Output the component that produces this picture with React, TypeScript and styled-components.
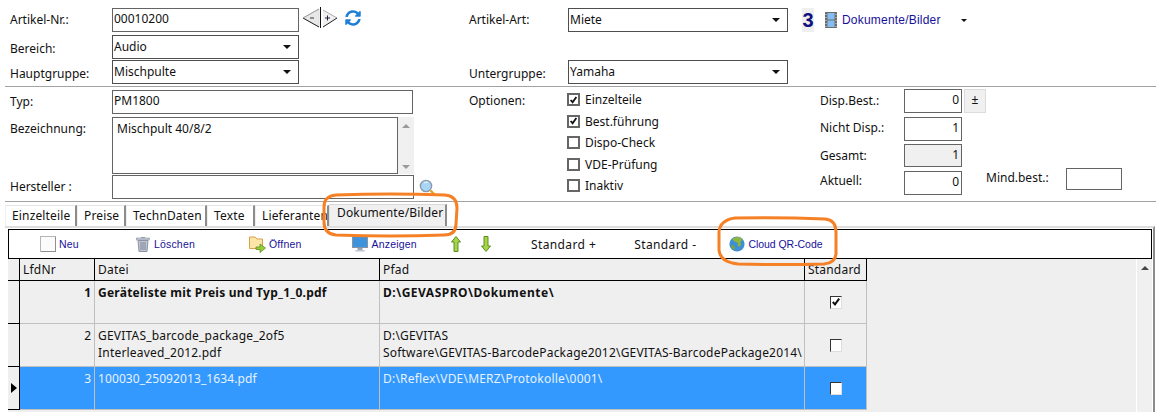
import React from "react";
import styled, { createGlobalStyle } from "styled-components";
import { FaSyncAlt } from "react-icons/fa";

const Global = createGlobalStyle`
  html, body { margin: 0; padding: 0; background: #fff; }
  body { font-family: "Noto Sans", "Open Sans", Arial, sans-serif; font-size: 12px; color: #111; }
  #root { width: 1156px; height: 412px; overflow: hidden; }
  * { box-sizing: border-box; }
`;

const Page = styled.div`
  position: relative;
  width: 1156px;
  height: 412px;
  overflow: hidden;
  background: #fff;
`;

const TopSection = styled.section`
  display: grid;
  grid-template-columns: 102px 357px 99px 1fr;
  grid-template-rows: 27px 25px 26px;
  height: 86px;
  padding: 8px 0 0 10px;
`;

const Divider = styled.hr`
  margin: 0 0 0 5px;
  border: 0;
  height: 1px;
  background: #a2a2a2;
`;

const Label = styled.label<{ $top?: number }>`
  display: block;
  padding-top: ${(p) => p.$top ?? 3}px;
  line-height: 17px;
  white-space: nowrap;
`;

const FieldRowWrap = styled.div`
  display: flex;
  align-items: flex-start;
  gap: 3px;
`;

const TextBox = styled.input<{ $w: number; $h?: number; $disabled?: boolean; $right?: boolean }>`
  display: block;
  width: ${(p) => p.$w}px;
  height: ${(p) => p.$h ?? 24}px;
  border: 1px solid #646464;
  border-radius: 0;
  outline: none;
  padding: 0 ${(p) => (p.$right ? 2 : 1)}px 3px 1px;
  margin: 0;
  font: inherit;
  color: #111;
  text-align: ${(p) => (p.$right ? "right" : "left")};
  background: ${(p) => (p.$disabled ? "#f0f0f0" : "#fff")};
`;

const SelectBox = styled.div<{ $w: number }>`
  position: relative;
  width: ${(p) => p.$w}px;
  height: 24px;
  border: 1px solid #4e4e4e;
  padding: 2px 0 0 1px;
  line-height: 17px;
  background: #fff;
  &::after {
    content: "";
    position: absolute;
    right: 7px;
    top: 9px;
    border-left: 4px solid transparent;
    border-right: 4px solid transparent;
    border-top: 4px solid #111;
  }
`;

const MiddleSection = styled.section`
  display: flex;
  height: 114px;
  padding-left: 10px;
`;

const LeftColumn = styled.div`
  width: 459px;
  display: flex;
  flex-direction: column;
`;

const FormRow = styled.div<{ $top: number }>`
  display: flex;
  margin-top: ${(p) => p.$top}px;
`;

const RowLabel = styled(Label)`
  width: 102px;
  flex: none;
`;

const MemoWrap = styled.div`
  display: flex;
  width: 302px;
  height: 57px;
`;

const Memo = styled.div`
  flex: 1;
  border: 1px solid #646464;
  padding: 2px 4px;
  line-height: 17px;
`;

const MemoScroll = styled.div`
  width: 16px;
  background: #f0f0f0;
  display: flex;
  flex-direction: column;
  justify-content: space-between;
  align-items: center;
  padding: 7px 0 5px;
`;

const ScrollArrow = styled.span<{ $down?: boolean; $dark?: boolean }>`
  width: 0;
  height: 0;
  border-left: 4px solid transparent;
  border-right: 4px solid transparent;
  ${(p) =>
    p.$down
      ? `border-top: 4px solid ${p.$dark ? "#444" : "#9a9a9a"};`
      : `border-bottom: 4px solid ${p.$dark ? "#444" : "#9a9a9a"};`}
`;

const SearchSlot = styled.span`
  margin: 4px 0 0 5px;
  display: block;
`;

const OptionsColumn = styled.div`
  width: 351px;
  display: flex;
`;

const OptionsLabel = styled(Label)`
  width: 98px;
  flex: none;
  margin-top: 2px;
`;

const CheckList = styled.div`
  display: flex;
  flex-direction: column;
  padding-top: 2px;
`;

const CheckRow = styled.div`
  display: flex;
  align-items: center;
  gap: 5px;
  height: 21.5px;
  line-height: 17px;
`;

const CheckSquare = styled.span`
  width: 13px;
  height: 13px;
  border: 2px solid #666;
  background: #fff;
  display: flex;
  align-items: center;
  justify-content: center;
`;

const StockColumn = styled.div`
  display: flex;
  flex-direction: column;
  padding-top: 2px;
`;

const StockRow = styled.div<{ $h: number }>`
  display: flex;
  height: ${(p) => p.$h}px;
`;

const StockLabel = styled(Label)`
  width: 84px;
  flex: none;
`;

const PlusMinus = styled.button`
  width: 22px;
  height: 24px;
  margin-left: 2px;
  padding: 0 0 3px;
  border: 1px solid #dcdcdc;
  background: #f0f0f0;
  font: inherit;
  color: #111;
`;

const MinLabel = styled.span`
  margin-left: 24px;
  width: 80px;
  line-height: 17px;
  margin-top: -2px;
`;

const MinBox = styled(TextBox)`
  margin-top: -3px;
`;

const TabStrip = styled.div`
  display: flex;
  align-items: flex-end;
  height: 22px;
  margin: 2px 0 0 5px;
`;

const Tab = styled.div<{ $w: number; $active?: boolean }>`
  width: ${(p) => p.$w}px;
  height: ${(p) => (p.$active ? 22 : 21)}px;
  flex: none;
  overflow: hidden;
  white-space: nowrap;
  padding: 0 0 0 ${(p) => (p.$active ? 7 : 6)}px;
  line-height: ${(p) => (p.$active ? 16 : 19)}px;
  font-size: 12px;
  letter-spacing: 0.15px;
  background: ${(p) => (p.$active ? "#f0f0f0" : "#fff")};
  border-top: 1px solid ${(p) => (p.$active ? "#d8d8d8" : "#e4e4e4")};
  border-right: 2px solid #8c8c8c;
  border-left: 1px solid ${(p) => (p.$active ? "#e0e0e0" : "#efefef")};
`;

const TabPanel = styled.div`
  margin: 0 0 0 5px;
  width: 1150px;
  height: 186px;
  border-top: 2px solid #dedede;
  border-right: 2px solid #8c8c8c;
  padding: 1px 0 0 3px;
`;

const Toolbar = styled.div`
  width: 1144px;
  height: 30px;
  border: 1px solid #000;
  display: flex;
  align-items: center;
  background: #fff;
`;

const ToolButton = styled.div<{ $left: number; $gap?: number; $spacing?: number }>`
  display: flex;
  align-items: center;
  gap: ${(p) => p.$gap ?? 3}px;
  margin-left: ${(p) => p.$left}px;
  font-family: "Liberation Sans", Arial, sans-serif;
  font-size: 10.5px;
  letter-spacing: ${(p) => p.$spacing ?? 0.2}px;
  color: #17109a;
  white-space: nowrap;
`;

const PlainAction = styled.div<{ $left: number }>`
  margin-left: ${(p) => p.$left}px;
  line-height: 17px;
  letter-spacing: 0.4px;
  white-space: nowrap;
`;

const GridArea = styled.div`
  display: flex;
  justify-content: space-between;
  width: 1144px;
  height: 154px;
  background: #efefef;
`;

const Table = styled.div`
  width: 859px;
`;

const COLS = "12px 75px 285px 425px 62px";

const HeaderRow = styled.div`
  display: grid;
  grid-template-columns: ${COLS};
  height: 22px;
`;

const HeaderCell = styled.div`
  border-right: 1px solid #000;
  border-bottom: 1px solid #000;
  padding: 2px 0 0 3px;
  line-height: 17px;
  letter-spacing: 0.2px;
`;

const DataRow = styled.div<{ $selected?: boolean; $bold?: boolean }>`
  display: grid;
  grid-template-columns: ${COLS};
  height: 43px;
  font-weight: ${(p) => (p.$bold ? 700 : 400)};
  color: ${(p) => (p.$selected ? "#e6f2ff" : "#111")};
  background: ${(p) => (p.$selected ? "#3399ff" : "transparent")};
`;

const Indicator = styled.div`
  background: #efefef;
  border-right: 1px solid #000;
  border-bottom: 1px solid #000;
  display: flex;
  align-items: center;
  padding-left: 3px;
`;

const Pointer = styled.span`
  width: 0;
  height: 0;
  border-top: 5px solid transparent;
  border-bottom: 5px solid transparent;
  border-left: 6px solid #000;
`;

const Cell = styled.div<{ $right?: boolean; $spacing?: number }>`
  border-right: 1px solid #c0c0c0;
  border-bottom: 1px solid #c0c0c0;
  padding: 3px 3px 0 3px;
  line-height: 17px;
  letter-spacing: ${(p) => p.$spacing ?? 0}px;
  overflow: hidden;
  white-space: nowrap;
  text-align: ${(p) => (p.$right ? "right" : "left")};
`;

const CheckCell = styled.div`
  border-right: 1px solid #c0c0c0;
  border-bottom: 1px solid #c0c0c0;
  display: flex;
  align-items: center;
  justify-content: center;
`;

const GridCheck = styled.span`
  width: 12px;
  height: 13px;
  background: #fff;
  border-top: 1px solid #333;
  border-left: 1px solid #333;
  border-right: 1px solid #ddd;
  border-bottom: 1px solid #ddd;
  display: flex;
  align-items: center;
  justify-content: center;
`;

const ScrollBar = styled.div`
  width: 16px;
  border-left: 1px solid #fff;
  background: #f0f0f0;
  display: flex;
  justify-content: center;
  padding-top: 7px;
`;

const NavGroup = styled.div`
  display: flex;
  align-items: center;
  height: 20px;
  gap: 8px;
`;

const Count = styled.span`
  display: block;
  width: 12px;
  height: 24px;
  margin-left: 14px;
  background: #efefef;
  font-family: "Liberation Sans", Arial, sans-serif;
  font-weight: 700;
  font-size: 20px;
  line-height: 24px;
  color: #101080;
  text-align: center;
`;

const DocButton = styled(ToolButton)`
  font-size: 12px;
  gap: 5px;
  margin-top: 4px;
`;

const DocCaret = styled.span`
  margin-left: 15px;
  border-left: 3px solid transparent;
  border-right: 3px solid transparent;
  border-top: 3px solid #111;
`;

const RightHead = styled.div`
  display: flex;
  align-items: flex-start;
  height: 27px;
`;

const Annotation = styled.svg`
  position: absolute;
  left: 0;
  top: 0;
  pointer-events: none;
`;

const CheckMark = ({ size = 11 }: { size?: number }) => (
  <svg width={size} height={size} viewBox="0 0 11 11">
    <path d="M2 5.5 L4.4 8.2 L9 1.8" fill="none" stroke="#111" strokeWidth="2.2" />
  </svg>
);

const NavArrows = () => (
  <svg width="35" height="22" viewBox="0 0 35 22">
    <path d="M1 11 L17 2 V20 Z" fill="#e8e8e8" stroke="#dcdcdc" />
    <path d="M1 11 L17 20" stroke="#222" strokeWidth="1" fill="none" />
    <path d="M1 11 L17 2" stroke="#999" strokeWidth="1" fill="none" />
    <path d="M8 11 H12" stroke="#333" />
    <path d="M18.5 0 V21" stroke="#111" strokeWidth="1" />
    <path d="M21 3 L35 11 L21 20 Z" fill="#f0f0f0" />
    <path d="M21 3 L35 11" stroke="#aaa" fill="none" />
    <path d="M21 20 L35 11" stroke="#222" fill="none" />
    <path d="M23 11 H28 M25.5 8.5 V13.5" stroke="#223" />
  </svg>
);

const Magnifier = () => (
  <svg width="17" height="17" viewBox="0 0 17 17">
    <circle cx="7" cy="7" r="5.6" fill="#a8d4f5" stroke="#8a9aa8" strokeWidth="1.4" />
    <path d="M5 4 A3.5 3.5 0 0 1 9 3.6" stroke="#eaf6ff" fill="none" />
    <path d="M11.5 11.5 L15.5 15.5" stroke="#e8a020" strokeWidth="2.4" />
  </svg>
);

const FilmIcon = () => (
  <svg width="12" height="16" viewBox="0 0 12 16">
    <rect width="12" height="16" fill="#6d6d6d" />
    <rect x="2.5" y="1" width="7" height="6.5" fill="#86bdf2" />
    <rect x="2.5" y="8.5" width="7" height="6.5" fill="#86bdf2" />
    <path d="M1 2v1M1 5v1M1 8v1M1 11v1M1 14v1M11 2v1M11 5v1M11 8v1M11 11v1M11 14v1" stroke="#ddd" />
  </svg>
);

const NewIcon = () => (
  <svg width="16" height="16" viewBox="0 0 16 16">
    <rect x="0.5" y="0.5" width="15" height="15" fill="#fbfbfb" stroke="#b5b5b5" />
    <path d="M1 15.5 H15.5 V1" stroke="#8f8f8f" fill="none" />
  </svg>
);

const TrashIcon = () => (
  <svg width="14" height="16" viewBox="0 0 14 16">
    <path d="M5 1 H9 V2 H5 Z" fill="#9aa0ad" />
    <rect x="0.5" y="2" width="13" height="2" fill="#c4c9d6" stroke="#8d93a3" strokeWidth="0.6" />
    <path d="M2 4.5 H12 L11 15.5 H3 Z" fill="#c0c5d3" stroke="#8d93a3" />
    <path d="M5 6 V14 M7 6 V14 M9 6 V14" stroke="#7f8698" />
  </svg>
);

const FolderIcon = () => (
  <svg width="17" height="17" viewBox="0 0 17 17">
    <path d="M0.5 1 H6 L8 3 H13.5 V12.5 H0.5 Z" fill="#fbe6a8" stroke="#d9a04a" />
    <path d="M7 11 H11 V8 L16.5 12 L11 16.5 V13.5 H7 Z" fill="#9acb3c" stroke="#5f8f20" strokeWidth="0.8" />
  </svg>
);

const MonitorIcon = () => (
  <svg width="16" height="16" viewBox="0 0 16 16">
    <rect x="0.5" y="0.5" width="15" height="11" fill="#3f93dd" stroke="#8794a3" />
    <rect x="5.5" y="12" width="5" height="2" fill="#9aa5b2" />
    <rect x="3.5" y="14" width="9" height="1.6" fill="#c2c8d0" />
  </svg>
);

const VArrow = ({ down }: { down?: boolean }) => (
  <svg width="10" height="16" viewBox="0 0 10 16">
    <path
      d={down ? "M3 0.5 H7 V10 H9.5 L5 15.5 L0.5 10 H3 Z" : "M3 15.5 H7 V6 H9.5 L5 0.5 L0.5 6 H3 Z"}
      fill="#a5d34a"
      stroke="#5e8f1e"
    />
  </svg>
);

const GlobeIcon = () => (
  <svg width="16" height="16" viewBox="0 0 16 16">
    <circle cx="8" cy="8" r="7.6" fill="#3f8fd6" />
    <path d="M3 3 Q6 0.5 10 1 L12 2 L13 4 L11.5 6 L12 9 L10 11 L8.5 9 L9 7 L6.5 6 L5 5 Z" fill="#8fb53a" />
    <path d="M2 10 L4 9 L6 11 L5.5 14 L3.5 12.5 Z" fill="#7da52f" />
  </svg>
);

const Field = ({ label, top, children }: { label: string; top?: number; children: React.ReactNode }) => (
  <>
    <Label $top={top}>{label}</Label>
    <div>{children}</div>
  </>
);

const Check = ({ checked, label }: { checked?: boolean; label: string }) => (
  <CheckRow>
    <CheckSquare>{checked && <CheckMark size={10} />}</CheckSquare>
    {label}
  </CheckRow>
);

const rows = [
  {
    no: "1",
    bold: true,
    file: ["Geräteliste mit Preis und Typ_1_0.pdf"],
    path: ["D:\\GEVASPRO\\Dokumente\\"],
    fileSpacing: 0.25,
    pathSpacing: 0.5,
    std: true,
  },
  {
    no: "2",
    file: ["GEVITAS_barcode_package_2of5", "Interleaved_2012.pdf"],
    path: ["D:\\GEVITAS", "Software\\GEVITAS-BarcodePackage2012\\GEVITAS-BarcodePackage2014\\"],
    fileSpacing: 0.2,
    pathSpacing: 0.2,
  },
  {
    no: "3",
    selected: true,
    file: ["100030_25092013_1634.pdf"],
    path: ["D:\\Reflex\\VDE\\MERZ\\Protokolle\\0001\\"],
    fileSpacing: 0.1,
    pathSpacing: 0.2,
  },
];

export default function App() {
  return (
    <Page>
      <Global />
      <TopSection>
        <Field label="Artikel-Nr.:">
          <FieldRowWrap>
            <TextBox $w={187} readOnly value="00010200" />
            <NavGroup>
              <NavArrows />
              <FaSyncAlt size={16} color="#1f7fd6" />
            </NavGroup>
          </FieldRowWrap>
        </Field>
        <Field label="Artikel-Art:">
          <RightHead>
            <SelectBox $w={220}>Miete</SelectBox>
            <Count>3</Count>
            <DocButton $left={11} $spacing={0.2}>
              <FilmIcon />
              Dokumente/Bilder
              <DocCaret />
            </DocButton>
          </RightHead>
        </Field>
        <Field label="Bereich:" top={5}>
          <SelectBox $w={187}>Audio</SelectBox>
        </Field>
        <span />
        <span />
        <Field label="Hauptgruppe:" top={5}>
          <SelectBox $w={187}>Mischpulte</SelectBox>
        </Field>
        <Field label="Untergruppe:" top={5}>
          <SelectBox $w={220}>Yamaha</SelectBox>
        </Field>
      </TopSection>
      <Divider />
      <MiddleSection>
        <LeftColumn>
          <FormRow $top={3}>
            <RowLabel>Typ:</RowLabel>
            <TextBox $w={301} readOnly value="PM1800" />
          </FormRow>
          <FormRow $top={3}>
            <RowLabel>Bezeichnung:</RowLabel>
            <MemoWrap>
              <Memo>Mischpult 40/8/2</Memo>
              <MemoScroll>
                <ScrollArrow />
                <ScrollArrow $down />
              </MemoScroll>
            </MemoWrap>
          </FormRow>
          <FormRow $top={1}>
            <RowLabel>Hersteller :</RowLabel>
            <TextBox $w={302} readOnly value="" />
            <SearchSlot>
              <Magnifier />
            </SearchSlot>
          </FormRow>
        </LeftColumn>
        <OptionsColumn>
          <OptionsLabel>Optionen:</OptionsLabel>
          <CheckList>
            <Check checked label="Einzelteile" />
            <Check checked label="Best.führung" />
            <Check label="Dispo-Check" />
            <Check label="VDE-Prüfung" />
            <Check label="Inaktiv" />
          </CheckList>
        </OptionsColumn>
        <StockColumn>
          <StockRow $h={28}>
            <StockLabel>Disp.Best.:</StockLabel>
            <TextBox $w={58} $right readOnly value="0" />
            <PlusMinus>±</PlusMinus>
          </StockRow>
          <StockRow $h={27}>
            <StockLabel $top={2}>Nicht Disp.:</StockLabel>
            <TextBox $w={58} $right readOnly value="1" />
          </StockRow>
          <StockRow $h={27}>
            <StockLabel>Gesamt:</StockLabel>
            <TextBox $w={58} $h={23} $right $disabled readOnly value="1" />
          </StockRow>
          <StockRow $h={24}>
            <StockLabel $top={1}>Aktuell:</StockLabel>
            <TextBox $w={58} $right readOnly value="0" />
            <MinLabel>Mind.best.:</MinLabel>
            <MinBox $w={56} $h={22} readOnly value="" />
          </StockRow>
        </StockColumn>
      </MiddleSection>
      <Divider />
      <TabStrip>
        <Tab $w={72}>Einzelteile</Tab>
        <Tab $w={49}>Preise</Tab>
        <Tab $w={81}>TechnDaten</Tab>
        <Tab $w={48}>Texte</Tab>
        <Tab $w={74}>Lieferanten</Tab>
        <Tab $w={118} $active>
          Dokumente/Bilder
        </Tab>
      </TabStrip>
      <TabPanel>
        <Toolbar>
          <ToolButton $left={31}>
            <NewIcon />
            Neu
          </ToolButton>
          <ToolButton $left={57} $gap={4}>
            <TrashIcon />
            Löschen
          </ToolButton>
          <ToolButton $left={54}>
            <FolderIcon />
            Öffnen
          </ToolButton>
          <ToolButton $left={50} $gap={4}>
            <MonitorIcon />
            Anzeigen
          </ToolButton>
          <ToolButton $left={34}>
            <VArrow />
          </ToolButton>
          <ToolButton $left={20}>
            <VArrow down />
          </ToolButton>
          <PlainAction $left={40}>Standard +</PlainAction>
          <PlainAction $left={38}>Standard -</PlainAction>
          <ToolButton $left={33} $spacing={-0.05}>
            <GlobeIcon />
            Cloud QR-Code
          </ToolButton>
        </Toolbar>
        <GridArea>
          <Table>
            <HeaderRow>
              <HeaderCell />
              <HeaderCell>LfdNr</HeaderCell>
              <HeaderCell>Datei</HeaderCell>
              <HeaderCell>Pfad</HeaderCell>
              <HeaderCell>Standard</HeaderCell>
            </HeaderRow>
            {rows.map((r) => (
              <DataRow key={r.no} $selected={r.selected} $bold={r.bold}>
                <Indicator>{r.selected && <Pointer />}</Indicator>
                <Cell $right>{r.no}</Cell>
                <Cell $spacing={r.fileSpacing}>
                  {r.file.map((t) => (
                    <div key={t}>{t}</div>
                  ))}
                </Cell>
                <Cell $spacing={r.pathSpacing}>
                  {r.path.map((t) => (
                    <div key={t}>{t}</div>
                  ))}
                </Cell>
                <CheckCell>
                  <GridCheck>{r.std && <CheckMark size={10} />}</GridCheck>
                </CheckCell>
              </DataRow>
            ))}
          </Table>
          <ScrollBar>
            <ScrollArrow $dark />
          </ScrollBar>
        </GridArea>
      </TabPanel>
      <Annotation width="1156" height="412" viewBox="0 0 1156 412" fill="none">
        <path
          d="M336 195 Q390 193 445 195 Q457 196 457 208 L456 224 Q456 235 444 235 Q390 237 336 235 Q324 234 324 222 L324 207 Q324 196 336 195 Z"
          stroke="#f58025"
          strokeWidth="3"
        />
        <path
          d="M735 218 Q780 217 825 219 Q836 220 836 232 L836 254 Q835 263 824 264 Q780 265 738 264 Q720 262 719 250 L719 232 Q720 220 735 218 Z"
          stroke="#f58025"
          strokeWidth="3"
        />
      </Annotation>
    </Page>
  );
}
